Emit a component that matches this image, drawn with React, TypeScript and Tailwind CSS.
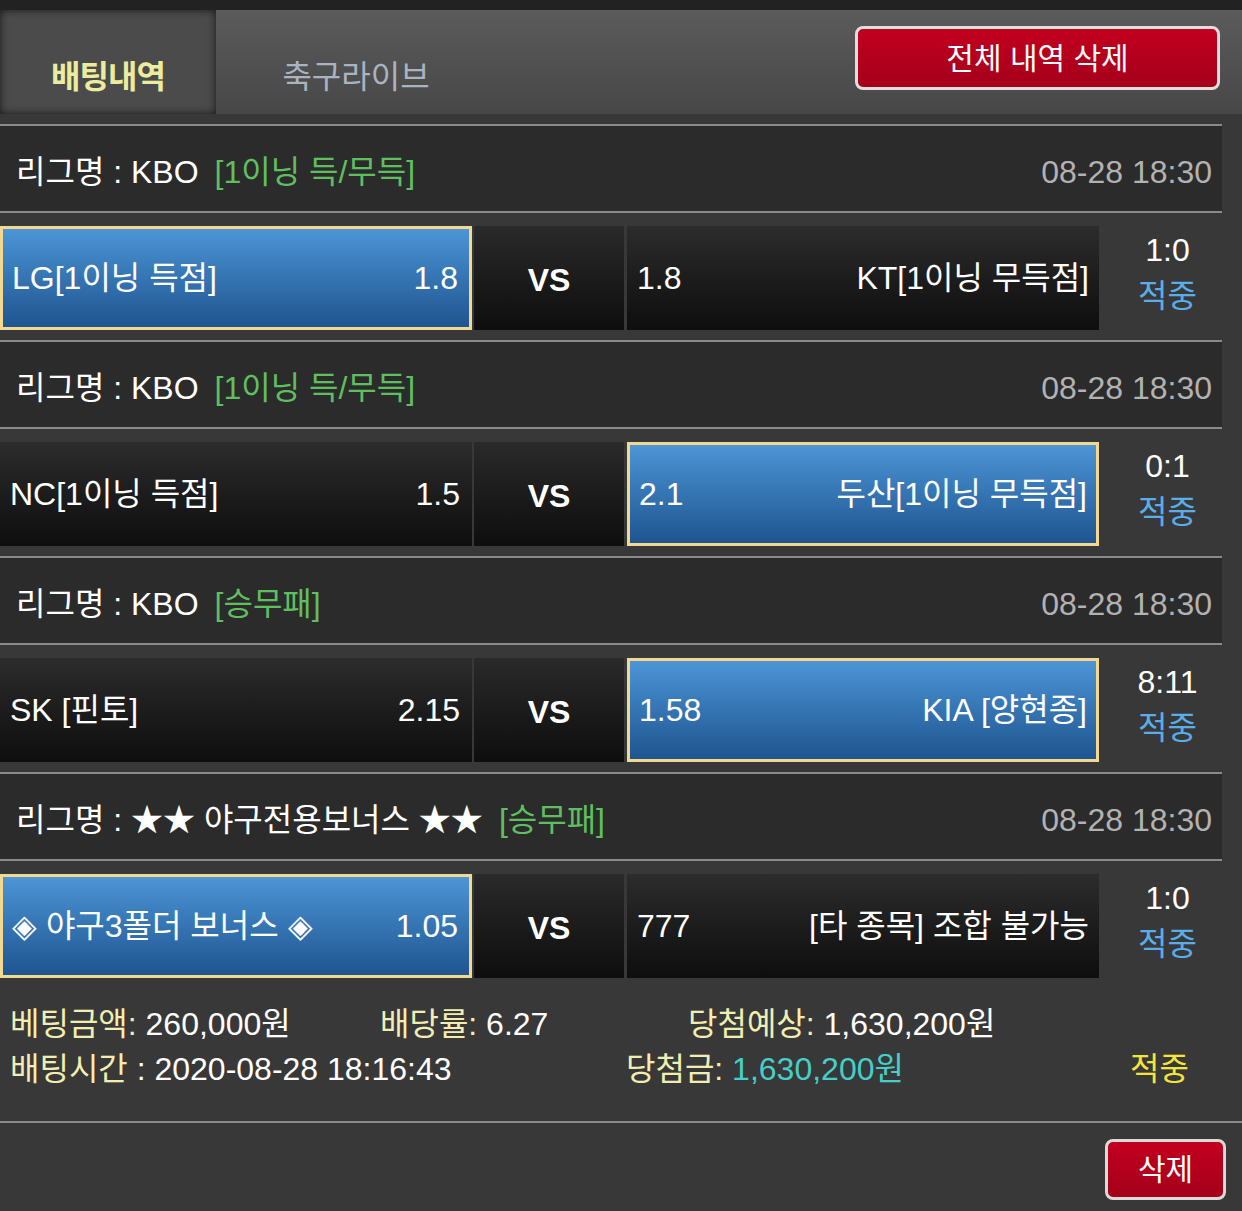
import React from "react";

const font = { fontFamily: '"Liberation Sans", "Noto Sans CJK KR", sans-serif' };

type Side = { name: string; odds: string; picked: boolean };

const games: {
  league: string;
  type: string;
  date: string;
  home: Side;
  away: Side;
  score: string;
}[] = [
  {
    league: "KBO",
    type: "[1이닝 득/무득]",
    date: "08-28 18:30",
    home: { name: "LG[1이닝 득점]", odds: "1.8", picked: true },
    away: { name: "KT[1이닝 무득점]", odds: "1.8", picked: false },
    score: "1:0",
  },
  {
    league: "KBO",
    type: "[1이닝 득/무득]",
    date: "08-28 18:30",
    home: { name: "NC[1이닝 득점]", odds: "1.5", picked: false },
    away: { name: "두산[1이닝 무득점]", odds: "2.1", picked: true },
    score: "0:1",
  },
  {
    league: "KBO",
    type: "[승무패]",
    date: "08-28 18:30",
    home: { name: "SK [핀토]", odds: "2.15", picked: false },
    away: { name: "KIA [양현종]", odds: "1.58", picked: true },
    score: "8:11",
  },
  {
    league: "★★ 야구전용보너스 ★★",
    type: "[승무패]",
    date: "08-28 18:30",
    home: { name: "◈ 야구3폴더 보너스 ◈", odds: "1.05", picked: true },
    away: { name: "[타 종목] 조합 불가능", odds: "777", picked: false },
    score: "1:0",
  },
];

const cellBase = "h-[104px] flex items-center justify-between text-white text-[32px]";
const picked =
  "bg-gradient-to-b from-[#4d95d6] to-[#1e5590] border-[3px] border-[#f2d890] px-[9px]";
const plain = "bg-gradient-to-b from-[#2c2c2c] to-[#0e0e0e] px-[10px]";

function TeamCell({ side, reverse }: { side: Side; reverse?: boolean }) {
  return (
    <div className={`${cellBase} w-[472px] ${side.picked ? picked : plain}`}>
      {reverse ? (
        <>
          <span>{side.odds}</span>
          <span>{side.name}</span>
        </>
      ) : (
        <>
          <span>{side.name}</span>
          <span className="pr-[2px]">{side.odds}</span>
        </>
      )}
    </div>
  );
}

export default function App() {
  return (
    <div className="w-[1242px] min-h-[1211px] bg-[#383838]" style={font}>
      {/* top bar */}
      <div className="h-[10px] bg-[#222222]" />
      <div className="h-[104px] flex bg-gradient-to-b from-[#5b5b5b] to-[#474747]">
        <div className="w-[216px] h-full flex items-center justify-center pt-[30px] bg-[#4b4b4b] shadow-[inset_0_0_8px_rgba(0,0,0,0.7)]">
          <span className="text-[32px] font-bold text-[#ecec9e] tracking-[-1px]">배팅내역</span>
        </div>
        <div className="w-[280px] h-full flex items-center justify-center pt-[30px]">
          <span className="text-[32px] text-[#aab3c2]">축구라이브</span>
        </div>
        <div className="flex-1 flex justify-end pt-[16px] pr-[22px]">
          <button className="w-[365px] h-[64px] rounded-[8px] border-[3px] border-[#e2dedb] bg-gradient-to-b from-[#c20020] to-[#a4001a] text-white text-[30px]">
            전체 내역 삭제
          </button>
        </div>
      </div>

      <div className="w-[1222px] pt-[10px]">
        {games.map((g, i) => (
          <div key={i}>
            <div className="h-[89px] border-y-2 border-[#8a8a8a] bg-[#2b2b2b] flex items-center justify-between pl-[16px] pr-[10px] pt-[6px] text-[32px]">
              <div className="text-white">
                리그명 : {g.league}
                <span className="ml-[16px] text-[#5fbf5f]">{g.type}</span>
              </div>
              <span className="text-[#b2b2b2]">{g.date}</span>
            </div>
            <div className="h-[127px] pt-[13px] flex">
              <TeamCell side={g.home} />
              <div className={`${cellBase} w-[150px] ml-[2px] justify-center bg-gradient-to-b from-[#2a2a2a] to-[#0e0e0e]`}>
                <span className="font-bold pt-[4px]">VS</span>
              </div>
              <div className="ml-[3px]">
                <TeamCell side={g.away} reverse />
              </div>
              <div className="flex-1 h-[104px] flex flex-col items-center justify-center pl-[14px] pb-[10px] leading-[46px] text-[32px]">
                <span className="text-white">{g.score}</span>
                <span className="text-[#5aaee8]">적중</span>
              </div>
            </div>
          </div>
        ))}
      </div>

      {/* summary */}
      <div className="h-[135px] border-b-2 border-[#8a8a8a] flex flex-col justify-center pb-[16px] text-[32px] leading-[45px]">
        <div className="flex">
          <div className="w-[380px] pl-[10px]">
            <span className="text-[#f2eeb2]">베팅금액:</span>
            <span className="text-white"> 260,000원</span>
          </div>
          <div className="w-[308px]">
            <span className="text-[#f2eeb2]">배당률:</span>
            <span className="text-white"> 6.27</span>
          </div>
          <div>
            <span className="text-[#f2eeb2]">당첨예상:</span>
            <span className="text-white"> 1,630,200원</span>
          </div>
        </div>
        <div className="flex">
          <div className="w-[626px] pl-[10px]">
            <span className="text-[#f2eeb2]">배팅시간</span>
            <span className="text-white"> : 2020-08-28 18:16:43</span>
          </div>
          <div className="w-[504px]">
            <span className="text-[#f2eeb2]">당첨금:</span>
            <span className="text-[#45cfc8]"> 1,630,200원</span>
          </div>
          <span className="text-[#f5e43c]">적중</span>
        </div>
      </div>

      <div className="flex justify-end pt-[16px] pr-[16px]">
        <button className="w-[121px] h-[61px] rounded-[8px] border-[3px] border-[#dedad7] bg-gradient-to-b from-[#c20020] to-[#a4001a] text-white text-[30px]">
          삭제
        </button>
      </div>
    </div>
  );
}
